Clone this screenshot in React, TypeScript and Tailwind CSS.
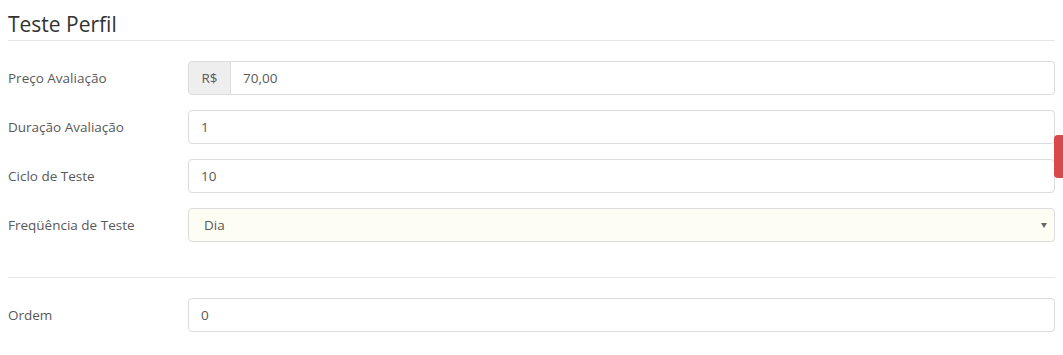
import React from "react";

const font = { fontFamily: '"Open Sans", "Liberation Sans", sans-serif' };

function Row({ label, children }: { label: string; children: React.ReactNode }) {
  return (
    <div className="flex items-center">
      <label className="w-[180px] shrink-0 text-[13.5px] text-[#595959]">{label}</label>
      <div className="flex-1">{children}</div>
    </div>
  );
}

function TextInput({ value }: { value: string }) {
  return (
    <div className="h-[34px] flex items-center px-[12px] border border-[#dcdcdc] rounded-[4px] bg-white text-[13.5px] text-[#595959]">
      {value}
    </div>
  );
}

export default function App() {
  return (
    <div className="relative w-[1063px] h-[355px] bg-white overflow-hidden" style={font}>
      <div className="pl-[8px] pr-[8px] pt-[13px]">
        <h3 className="text-[21px] leading-[23px] text-[#333] pb-[4px] border-b border-[#e5e5e5]">
          Teste Perfil
        </h3>

        <div className="mt-[20px] flex flex-col gap-[15px]">
          <Row label="Preço Avaliação">
            <div className="flex h-[34px] text-[13.5px] text-[#595959]">
              <span className="w-[43px] flex items-center justify-center bg-[#eee] border border-[#dcdcdc] rounded-l-[4px]">
                R$
              </span>
              <span className="flex-1 flex items-center px-[12px] border border-l-0 border-[#dcdcdc] rounded-r-[4px]">
                70,00
              </span>
            </div>
          </Row>
          <Row label="Duração Avaliação">
            <TextInput value="1" />
          </Row>
          <Row label="Ciclo de Teste">
            <TextInput value="10" />
          </Row>
          <Row label="Freqüência de Teste">
            <div className="h-[34px] flex items-center justify-between pl-[15px] pr-[7px] border border-[#dcdcdc] rounded-[4px] bg-[#fdfdf4] text-[13.5px] text-[#595959]">
              <span>Dia</span>
              <svg width="6" height="5" viewBox="0 0 6 5">
                <path d="M0 0H6L3 5Z" fill="#666" />
              </svg>
            </div>
          </Row>
        </div>

        <div className="mt-[35px] border-t border-[#e5e5e5]" />

        <div className="mt-[20px]">
          <Row label="Ordem">
            <TextInput value="0" />
          </Row>
        </div>
      </div>

      <div className="absolute right-0 top-[135px] w-[9px] h-[43px] bg-[#d9484a] rounded-l-[4px]" />
    </div>
  );
}
